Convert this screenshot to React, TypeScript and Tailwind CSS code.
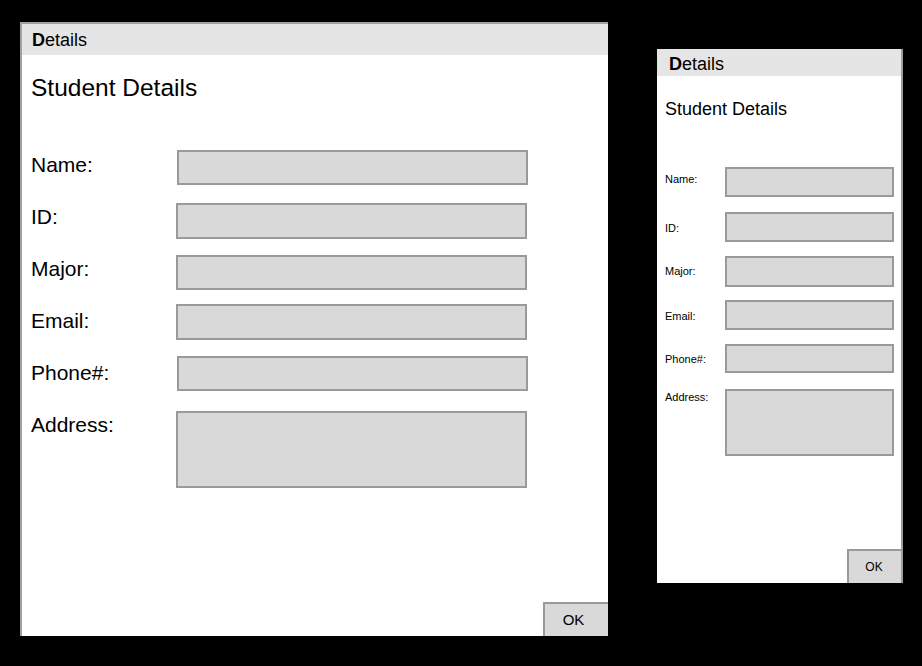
const BIG_ROWS = [
  { label: 'Name:', mt: 'mt-[50px]', h: 'h-[35px]', lt: 'mt-[4px]', shift: 'ml-[1px]' },
  { label: 'ID:', mt: 'mt-[18px]', h: 'h-[36px]', lt: 'mt-[3px]', shift: '' },
  { label: 'Major:', mt: 'mt-[16px]', h: 'h-[35px]', lt: 'mt-[3px]', shift: '' },
  { label: 'Email:', mt: 'mt-[14px]', h: 'h-[36px]', lt: 'mt-[6px]', shift: '' },
  { label: 'Phone#:', mt: 'mt-[16px]', h: 'h-[35px]', lt: 'mt-[6px]', shift: 'ml-[1px]' },
  { label: 'Address:', mt: 'mt-[20px]', h: 'h-[77px]', lt: 'mt-[3px]', shift: '' },
]

const SMALL_ROWS = [
  { label: 'Name:', mt: 'mt-[49px]', h: 'h-[30px]', lt: 'mt-[5px]' },
  { label: 'ID:', mt: 'mt-[15px]', h: 'h-[30px]', lt: 'mt-[9px]' },
  { label: 'Major:', mt: 'mt-[14px]', h: 'h-[31px]', lt: 'mt-[8px]' },
  { label: 'Email:', mt: 'mt-[13px]', h: 'h-[30px]', lt: 'mt-[9px]' },
  { label: 'Phone#:', mt: 'mt-[14px]', h: 'h-[29px]', lt: 'mt-[8px]' },
  { label: 'Address:', mt: 'mt-[16px]', h: 'h-[67px]', lt: 'mt-[1px]' },
]

function BigWindow() {
  return (
    <div className="w-[588px] h-[614px] bg-white border-l-2 border-t-2 border-[#a0a0a0] flex flex-col">
      <div className="h-[31px] bg-[#e5e5e5] pl-[10px] pt-[1px] text-[18px] leading-[31px]">
        <span className="font-semibold">D</span>etails
      </div>
      <div className="pl-[9px] mt-[21px] text-[24.5px] leading-[24px]">Student Details</div>
      {BIG_ROWS.map(r => (
        <div key={r.label} className={`flex items-start ${r.mt}`}>
          <div className={`w-[154px] pl-[9px] text-[21px] leading-[21px] ${r.lt}`}>{r.label}</div>
          <div className={`w-[351px] ${r.h} ${r.shift} bg-[#d9d9d9] border-2 border-[#9a9a9a]`} />
        </div>
      ))}
      <div className="flex-1" />
      <div className="flex justify-end">
        <div className="w-[65px] h-[34px] bg-[#d9d9d9] border-l-2 border-t-2 border-[#9a9a9a] flex items-center justify-center pr-[6px] text-[15px]">
          OK
        </div>
      </div>
    </div>
  )
}

function SmallWindow() {
  return (
    <div className="w-[246px] h-[534px] bg-white border-r-2 border-[#9d9d9d] flex flex-col">
      <div className="h-[27px] bg-[#e5e5e5] pl-[12px] pt-[4px] text-[18px] leading-[23px]">
        <span className="font-semibold">D</span>etails
      </div>
      <div className="pl-[8px] mt-[24px] text-[18px] leading-[18px]">Student Details</div>
      {SMALL_ROWS.map(r => (
        <div key={r.label} className={`flex items-start ${r.mt}`}>
          <div className={`w-[68px] pl-[8px] text-[11px] leading-[14px] ${r.lt}`}>{r.label}</div>
          <div className={`w-[169px] ${r.h} bg-[#d9d9d9] border-2 border-[#9a9a9a]`} />
        </div>
      ))}
      <div className="flex-1" />
      <div className="flex justify-end">
        <div className="w-[54px] h-[34px] bg-[#d9d9d9] border-l-2 border-t-2 border-[#9a9a9a] flex items-center justify-center pr-[2px] text-[12px]">
          OK
        </div>
      </div>
    </div>
  )
}

export default function App() {
  return (
    <div
      className="w-[922px] h-[666px] bg-black flex items-start pl-[20px] pt-[22px] text-black"
      style={{ fontFamily: '"Liberation Sans", Arial, sans-serif' }}
    >
      <BigWindow />
      <div className="ml-[49px] mt-[27px]">
        <SmallWindow />
      </div>
    </div>
  )
}
